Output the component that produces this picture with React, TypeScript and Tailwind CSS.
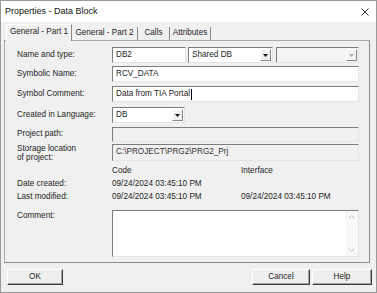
import type { ReactNode } from 'react';

const sunken =
  'border border-t-[#7c7c7c] border-l-[#7c7c7c] border-b-[#e4e4e4] border-r-[#e4e4e4]';

function Arrow({ disabled = false }: { disabled?: boolean }) {
  return (
    <div
      className={`ml-auto mr-[1px] flex h-[12px] w-[11px] items-center justify-center border border-t-white border-l-white border-b-[#858585] border-r-[#858585] ${
        disabled ? 'bg-[#f4f4f4]' : 'bg-[#f0f0f0]'
      }`}
    >
      <svg width="5" height="3" viewBox="0 0 5 3">
        <path d="M0 0h5L2.5 3z" fill={disabled ? '#b0b0b0' : '#111'} />
      </svg>
    </div>
  );
}

function Label({ children }: { children: ReactNode }) {
  return <div className="w-[95px] shrink-0">{children}</div>;
}

function Button({ label, width }: { label: string; width: string }) {
  return (
    <div
      className={`${width} flex h-[16px] items-center justify-center border border-t-white border-l-white border-b-[#3c3c3c] border-r-[#3c3c3c] bg-[#efefef] shadow-[inset_-1px_-1px_0_#a3a3a3]`}
    >
      {label}
    </div>
  );
}

export default function App() {
  return (
    <div className="flex h-[293px] w-[377px] flex-col overflow-hidden border border-[#9a9a9a] bg-[#f0f0f0] font-['Liberation_Sans',Arial,sans-serif] text-[8.2px] leading-none text-[#1e1e1e]">
      {/* Title bar */}
      <div className="flex h-[21px] shrink-0 items-center justify-between bg-white pl-[4px] pr-[7px]">
        <span className="text-[9px] text-[#111]">Properties - Data Block</span>
        <svg width="8" height="8" viewBox="0 0 8 8">
          <path d="M0.5 0.5l7 7M7.5 0.5l-7 7" stroke="#333" strokeWidth="1" />
        </svg>
      </div>

      {/* Tabs */}
      <div className="flex h-[18px] shrink-0 items-end pl-[5px]">
        <div className="relative z-10 -mb-px flex h-[17px] w-[66px] items-center justify-center border-t border-l border-r border-t-white border-l-white border-r-[#8a8a8a] bg-[#f0f0f0] pb-[1px]">
          General - Part 1
        </div>
        <div className="flex h-[13px] w-[66px] items-center justify-center border-r border-[#8a8a8a]">
          General - Part 2
        </div>
        <div className="flex h-[13px] w-[32px] items-center justify-center border-r border-[#8a8a8a]">
          Calls
        </div>
        <div className="flex h-[13px] w-[41px] items-center justify-center border-r border-[#8a8a8a]">
          Attributes
        </div>
      </div>

      {/* Tab page */}
      <div className="ml-[3px] flex h-[223px] w-[366px] shrink-0 flex-col border border-t-[#a9a9a9] border-l-[#a9a9a9] border-b-[#8c8c8c] border-r-[#8c8c8c] pl-[12px]">
        <div className="mt-[6px] flex h-[16px] items-center">
          <Label>Name and type:</Label>
          <div className={`flex h-full w-[74px] items-center bg-white pl-[3px] ${sunken}`}>DB2</div>
          <div className={`ml-[2px] flex h-full w-[85px] items-center bg-white pl-[3px] ${sunken}`}>
            Shared DB
            <Arrow />
          </div>
          <div className={`ml-[3px] flex h-full w-[83px] items-center bg-[#f4f4f4] ${sunken}`}>
            <Arrow disabled />
          </div>
        </div>

        <div className="mt-[3px] flex h-[16px] items-center">
          <Label>Symbolic Name:</Label>
          <div className={`flex h-full w-[247px] items-center bg-white pl-[3px] ${sunken}`}>RCV_DATA</div>
        </div>

        <div className="mt-[4px] flex h-[16px] items-center">
          <Label>Symbol Comment:</Label>
          <div className={`flex h-full w-[247px] items-center bg-white pl-[3px] ${sunken}`}>
            Data from TIA Portal
            <span className="ml-[1px] h-[11px] w-px bg-black" />
          </div>
        </div>

        <div className="mt-[5px] flex h-[16px] items-center">
          <Label>Created in Language:</Label>
          <div className={`flex h-full w-[73px] items-center bg-white pl-[3px] ${sunken}`}>
            DB
            <Arrow />
          </div>
        </div>

        <div className="mt-[4px] flex h-[15px] items-center">
          <Label>Project path:</Label>
          <div className={`h-full w-[247px] bg-[#f0f0f0] ${sunken}`} />
        </div>

        <div className="mt-[2px] flex h-[17px] items-center">
          <Label>
            <div className="leading-[9px]">
              Storage location
              <br />
              of project:
            </div>
          </Label>
          <div className={`flex h-full w-[247px] items-center bg-[#f0f0f0] pl-[3px] text-[#333] ${sunken}`}>
            {'C:\\PROJECT\\PRG2\\PRG2_Prj'}
          </div>
        </div>

        <div className="mt-[5px] flex h-[10px] items-center">
          <Label>{''}</Label>
          <div className="w-[129px]">Code</div>
          <div>Interface</div>
        </div>

        <div className="mt-[2px] flex h-[12px] items-center">
          <Label>Date created:</Label>
          <div className="w-[129px]">09/24/2024 03:45:10 PM</div>
        </div>

        <div className="mt-[1px] flex h-[12px] items-center">
          <Label>Last modified:</Label>
          <div className="w-[129px]">09/24/2024 03:45:10 PM</div>
          <div>09/24/2024 03:45:10 PM</div>
        </div>

        <div className="mt-[7px] flex">
          <div className="w-[95px] shrink-0 pt-[2px]">Comment:</div>
          <div className={`flex h-[47px] w-[247px] bg-white ${sunken}`}>
            <div className="ml-auto flex w-[13px] flex-col items-center justify-between bg-[#f8f8f8] py-[4px]">
              <svg width="7" height="4" viewBox="0 0 7 4">
                <path d="M0.5 3.5l3-3 3 3" stroke="#c2c2c2" fill="none" />
              </svg>
              <svg width="7" height="4" viewBox="0 0 7 4">
                <path d="M0.5 0.5l3 3 3-3" stroke="#c2c2c2" fill="none" />
              </svg>
            </div>
          </div>
        </div>
      </div>

      {/* Buttons */}
      <div className="mt-[6px] flex pl-[6px] pr-[4px]">
        <Button label="OK" width="w-[56px]" />
        <div className="ml-auto flex gap-[2px]">
          <Button label="Cancel" width="w-[58px]" />
          <Button label="Help" width="w-[60px]" />
        </div>
      </div>
    </div>
  );
}
